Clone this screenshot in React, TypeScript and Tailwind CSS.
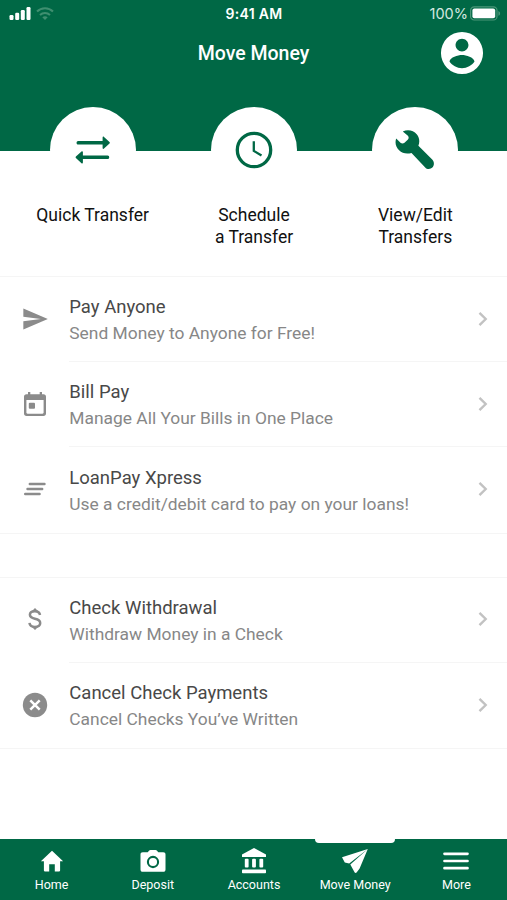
import type { ReactNode } from "react";

function Signal() {
  return (
    <svg width="22" height="15" viewBox="0 0 22 15" fill="#fff">
      <rect x="0.5" y="9" width="4" height="5" rx="1.2" />
      <rect x="6.2" y="6.8" width="4" height="7.2" rx="1.2" />
      <rect x="11.8" y="4" width="4" height="10" rx="1.2" />
      <rect x="17.5" y="1" width="4" height="13" rx="1.2" />
    </svg>
  );
}

function Wifi() {
  return (
    <svg width="18" height="14" viewBox="0 0 18 14" fill="none" stroke="#3f8f70" strokeWidth="2.1">
      <path d="M1 4.600C5.500 .2 12.500 .2 17 4.600" />
      <path d="M4 8c2.900-2.700 7.100-2.700 10 0" />
      <path d="M6.300 10.200c1.600-1.200 3.800-1.200 5.400 0L9 12.900z" fill="#3f8f70" stroke="none" />
    </svg>
  );
}

function Battery() {
  return (
    <svg width="31" height="15" viewBox="0 0 31 15">
      <rect x="0.6" y="0.8" width="26.4" height="13.2" rx="3.6" fill="none" stroke="#4a9678" strokeWidth="1.2" />
      <rect x="2.4" y="2.5" width="22.8" height="9.8" rx="2" fill="#fff" />
      <path d="M28.400 5v4.800c1-.4 1.700-1.300 1.700-2.400S29.400 5.400 28.400 5z" fill="#4a9678" />
    </svg>
  );
}

function Glyph({ d, size }: { d: string; size: number }) {
  return (
    <svg width={size} height={size} viewBox="0 0 24 24" fill="currentColor">
      <path d={d} />
    </svg>
  );
}

const actions: { lines: string[]; icon: ReactNode }[] = [
  {
    lines: ["Quick Transfer"],
    icon: (
      <svg width="38" height="30" viewBox="0 0 38 30" fill="currentColor">
        <path d="M4.200 5.900h24.400V2.500c0-.9.8-1.200 1.400-.6l5.500 5.100c.5.500.5 1 0 1.500l-5.500 5.100c-.6.600-1.400.300-1.400-.6V9.500H4.200c-2.200 0-2.200-3.600 0-3.600z" />
        <path d="M33.600 20.500H8.900v-3.400c0-.9-.8-1.200-1.400-.6L1.900 21.600c-.5.500-.5 1 0 1.500l5.600 5.100c.6.600 1.400.3 1.400-.6v-3.500h24.700c2.200 0 2.200-3.600 0-3.600z" />
      </svg>
    ),
  },
  {
    lines: ["Schedule", "a Transfer"],
    icon: (
      <svg width="38" height="38" viewBox="0 0 38 38" fill="none" stroke="currentColor">
        <circle cx="19" cy="19" r="16.700" strokeWidth="3.300" />
        <path d="M18.800 10.200v9.700l7.700 4.700" strokeWidth="2.300" />
      </svg>
    ),
  },
  {
    lines: ["View/Edit", "Transfers"],
    icon: (
      <svg width="40" height="40" viewBox="0 0 40 40" fill="currentColor">
        <path d="M7.800 1.500C12.500-1 18.500.2 21.700 4.200c2.700 3.300 3.300 7.300 1.700 11.500L37.200 29.600c1.200 1.200 1.700 2.500 1.700 4.100 0 2.900-2.300 5.200-5.100 5.200-1.500 0-2.700-.5-3.600-1.500L16.500 22.900c-4.500 1.500-9.200.6-12.400-2.600C.8 17.100-.3 12.800 1.200 8.600L5.500 12.700c1.200 1 2.800 1 4 0l3.200-2.900c1.200-1.200 1.300-2.700.2-4z" />
      </svg>
    ),
  },
];

type Row = { title: string; sub: string; icon: ReactNode };

const payments: Row[] = [
  {
    title: "Pay Anyone",
    sub: "Send Money to Anyone for Free!",
    icon: <Glyph size={28} d="M2.010 21L23 12 2.010 3 2 10l15 2-15 2z" />,
  },
  {
    title: "Bill Pay",
    sub: "Manage All Your Bills in One Place",
    icon: (
      <svg width="24" height="26" viewBox="0 0 24 26" fill="currentColor">
        <path
          fillRule="evenodd"
          d="M5 1h2.300v2.200h9.400V1H19v2.200h1.500c1.600 0 2.500 1 2.500 2.500v16.800c0 1.500-.9 2.500-2.500 2.500h-17C1.900 25 1 24 1 22.500V5.700c0-1.500.9-2.500 2.500-2.500H5zM3.400 9v12.600c0 .7.4 1.100 1.100 1.100h15c.7 0 1.100-.4 1.100-1.100V9z"
        />
        <rect x="5.800" y="11.800" width="6.200" height="6" rx="1" />
      </svg>
    ),
  },
  {
    title: "LoanPay Xpress",
    sub: "Use a credit/debit card to pay on your loans!",
    icon: (
      <svg width="24" height="14" viewBox="0 0 24 14" fill="none" stroke="currentColor" strokeWidth="2.400" strokeLinecap="round">
        <path d="M6.800 2h14.700M4.500 7h14.700M2.200 12h14.400" />
      </svg>
    ),
  },
];

const checks: Row[] = [
  {
    title: "Check Withdrawal",
    sub: "Withdraw Money in a Check",
    icon: (
      <svg width="16" height="24" viewBox="0 0 16 24" fill="none" stroke="currentColor" strokeWidth="2.500">
        <path d="M13 8C12.700 5.400 10.800 4.200 7.800 4.200c-3 0-4.900 1.300-4.900 3.600 0 2.200 1.700 3.200 5 4 3.500.8 5.300 1.700 5.300 4.200 0 2.500-2.100 3.900-5.300 3.900-3.300 0-5.200-1.500-5.400-4" />
        <path d="M4.500 4.500L8 1l3.500 3.500zM4.500 19.500L8 23l3.500-3.500z" fill="currentColor" stroke="none" />
      </svg>
    ),
  },
  {
    title: "Cancel Check Payments",
    sub: "Cancel Checks You’ve Written",
    icon: (
      <svg width="26" height="26" viewBox="0 0 26 26">
        <circle cx="13" cy="13" r="12.200" fill="currentColor" />
        <path d="M8.300 8.300l9.400 9.400M17.700 8.300l-9.400 9.400" stroke="#fff" strokeWidth="2.500" />
      </svg>
    ),
  },
];

function ListGroup({ rows }: { rows: Row[] }) {
  return (
    <ul className="shrink-0 border-y border-[#f5f5f5]">
      {rows.map((row, i) => (
        <li key={row.title} className="flex h-[85.200px] items-stretch">
          <div className="flex w-[69px] shrink-0 items-center justify-center pb-[1.500px] text-[#8b8b8b]">{row.icon}</div>
          <div
            className={
              i < rows.length - 1
                ? "flex min-w-0 flex-1 items-center justify-between border-b border-[#f5f5f5] pr-[19.500px]"
                : "flex min-w-0 flex-1 items-center justify-between pr-[19.500px]"
            }
          >
            <div className="whitespace-nowrap pl-[0.300px] pt-[2.300px]">
              <div className="text-[18.500px] leading-[26px] text-[#484848]">{row.title}</div>
              <div className="text-[17.400px] leading-[26px] text-[#878787]">{row.sub}</div>
            </div>
            <svg className="mb-px" width="10" height="16" viewBox="0 0 10 16" fill="none" stroke="#c2c2c2" strokeWidth="2.400">
              <path d="M1.500 1.800L7.700 8l-6.200 6.200" />
            </svg>
          </div>
        </li>
      ))}
    </ul>
  );
}

const tabs: { label: string; icon: ReactNode; active?: boolean }[] = [
  {
    label: "Home",
    icon: (
      <svg width="24" height="22" viewBox="0 0 24 22" fill="#fff">
        <path d="M12 .7L.9 11.200h3v9.400c0 .5.300.8.800.8h4.500v-7.200h5.600v7.200h4.500c.5 0 .8-.3.8-.8v-9.400h3z" />
      </svg>
    ),
  },
  {
    label: "Deposit",
    icon: (
      <svg width="26" height="24" viewBox="0 0 26 24">
        <path fill="#fff" d="M7.700 3.300L9 1.800C9.400 1.300 9.800 1 10.500 1h5c.7 0 1.100.3 1.500.8l1.300 1.500h4.900c1.500 0 2.300.8 2.300 2.200v15c0 1.500-.8 2.300-2.300 2.300H2.800C1.300 22.800.5 22 .5 20.500v-15c0-1.400.8-2.200 2.300-2.200z" />
        <circle cx="13" cy="13" r="5.100" fill="none" stroke="#006845" strokeWidth="2.100" />
      </svg>
    ),
  },
  {
    label: "Accounts",
    icon: (
      <svg width="26" height="28" viewBox="0 0 26 28" fill="#fff">
        <path d="M13 1L25 7.500V10H1V7.500z" />
        <rect x="3.800" y="11.800" width="3.800" height="8.800" rx="1" />
        <rect x="11.100" y="11.800" width="3.800" height="8.800" rx="1" />
        <rect x="18.400" y="11.800" width="3.800" height="8.800" rx="1" />
        <rect x="1" y="22.600" width="24" height="3.600" rx="0.800" />
      </svg>
    ),
  },
  {
    label: "Move Money",
    active: true,
    icon: (
      <svg width="28" height="26" viewBox="0 0 28 26" fill="#fff">
        <path d="M26.800 1L1 9.200l2.800 5.300 4.400.9zM26.800 1L9.300 16.600l4.400 7.900c.5.600 1.400.5 1.900-.1l3-3.900z" />
      </svg>
    ),
  },
  {
    label: "More",
    icon: (
      <svg width="26" height="20" viewBox="0 0 26 20" stroke="#fff" strokeWidth="2.700" strokeLinecap="round">
        <path d="M1.500 2.800h23M1.500 10h23M1.500 17.200h23" />
      </svg>
    ),
  },
];

export default function App() {
  return (
    <div className="flex h-[900px] w-[507px] flex-col overflow-hidden bg-white font-['Roboto','Noto_Sans',sans-serif]">
      <header className="h-[151px] shrink-0 bg-[#006845] text-white">
        <div className="grid h-[27px] grid-cols-3 items-center">
          <div className="flex items-center gap-[5px] pl-[8.500px]">
            <Signal />
            <Wifi />
          </div>
          <div className="pl-px pt-px text-center font-['Inter',sans-serif] text-[14px] font-semibold leading-[26px] tracking-[0.300px]">
            9:41 AM
          </div>
          <div className="flex items-center justify-end gap-[2px] pr-[6px] font-['Inter',sans-serif] text-[14.500px] leading-[27px] text-[#d5e8e0]">
            100%
            <Battery />
          </div>
        </div>
        <div className="grid h-[51px] grid-cols-[1fr_auto_1fr] items-center">
          <span />
          <h1 className="pt-[2px] text-[19.500px] font-medium leading-[49px]">Move Money</h1>
          <div className="flex justify-end pr-[20.500px]">
            <svg width="50" height="50" viewBox="0 0 24 24" fill="#fff">
              <path d="M12 1.900a10.100 10.100 0 1 0 0 20.200a10.100 10.100 0 1 0 0-20.200zm0 3.200c1.700 0 3.100 1.400 3.100 3.100s-1.400 3.100-3.100 3.100-3.100-1.400-3.100-3.100 1.400-3.100 3.100-3.100zm0 14.200c-2.500 0-4.700-1.300-6-3.200.3-2 4-3.100 6-3.100s5.700 1.100 6 3.100c-1.300 1.900-3.500 3.200-6 3.200z" />
            </svg>
          </div>
        </div>
      </header>

      <section className="-mt-[44px] grid h-[169px] shrink-0 grid-cols-3 pl-[12px] pr-[11px]">
        {actions.map((a) => (
          <div key={a.lines[0]} className="flex flex-col items-center">
            <div className="flex size-[86px] items-center justify-center rounded-full bg-white text-[#006845]">{a.icon}</div>
            <div className="pt-[10.500px] text-center text-[17.500px] leading-[22.500px] text-[#111]">
              {a.lines.map((l) => (
                <div key={l}>{l}</div>
              ))}
            </div>
          </div>
        ))}
      </section>

      <ListGroup rows={payments} />
      <div className="h-[43px] shrink-0" />
      <ListGroup rows={checks} />

      <nav className="mt-auto grid h-[61px] shrink-0 grid-cols-5 bg-[#006845] pl-px text-white">
        {tabs.map((t) => (
          <div key={t.label} className="relative flex flex-col items-center">
            {t.active && <span className="absolute -top-px h-[5px] w-[80px] rounded-b-[4px] bg-white" />}
            <div className="flex h-[34px] items-center pt-[10px]">{t.icon}</div>
            <span className="pt-[3px] text-[12.500px] leading-[18px]">{t.label}</span>
          </div>
        ))}
      </nav>
    </div>
  );
}
